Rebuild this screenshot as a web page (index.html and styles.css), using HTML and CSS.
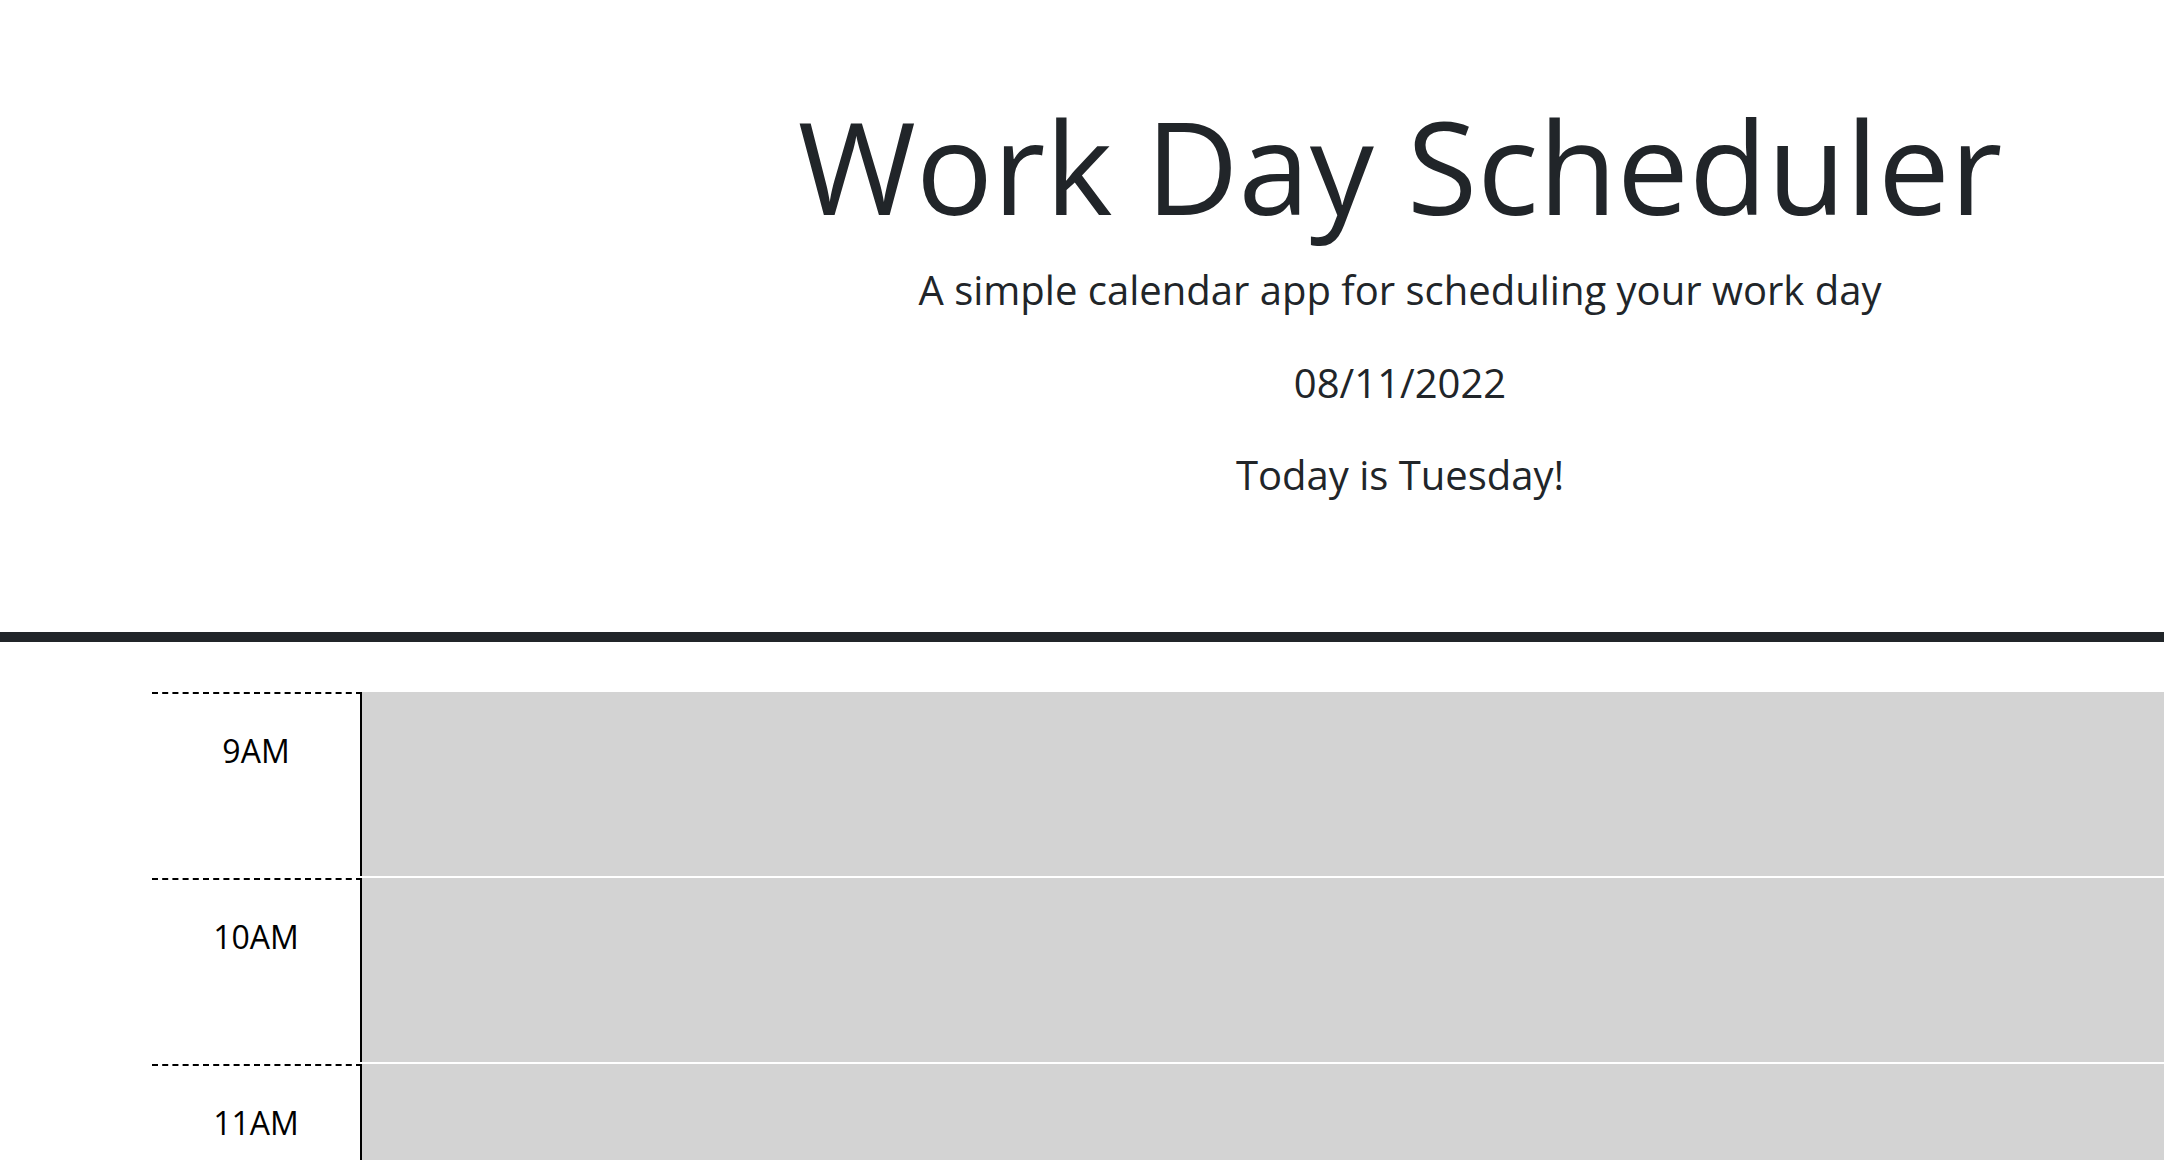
FILE: index.html
```html
<!DOCTYPE html>
<html lang="en">
<head>
<meta charset="utf-8">
<title>Work Day Scheduler</title>
<link rel="stylesheet" href="styles.css">
</head>
<body>
<header class="jumbotron">
  <h1 class="display-title">Work Day Scheduler</h1>
  <p class="lead">A simple calendar app for scheduling your work day</p>
  <p class="lead" id="currentDay">08/11/2022</p>
  <p class="lead" id="weekday">Today is Tuesday!</p>
</header>
<main class="schedule">
  <div class="time-block">
    <div class="hour">9AM</div>
    <textarea class="description"></textarea>
  </div>
  <div class="time-block">
    <div class="hour">10AM</div>
    <textarea class="description"></textarea>
  </div>
  <div class="time-block">
    <div class="hour">11AM</div>
    <textarea class="description"></textarea>
  </div>
  <div class="time-block">
    <div class="hour">12PM</div>
    <textarea class="description"></textarea>
  </div>
</main>
</body>
</html>
```
FILE: styles.css
```css
html, body {
  margin: 0;
  padding: 0;
  overflow: hidden;
}

body {
  font-family: "Open Sans", "Liberation Sans", sans-serif;
  color: #212529;
  background: #fff;
}

.jumbotron {
  box-sizing: border-box;
  height: 642px;
  padding: 89.3px 0 0 636px;
  text-align: center;
  border-bottom: 10px solid #212529;
}

.display-title {
  margin: 0 0 17px;
  font-size: 128px;
  line-height: 154px;
  font-weight: 400;
  color: #212529;
}

.lead {
  margin: 0 0 32.5px;
  font-size: 40px;
  line-height: 60px;
  font-weight: 400;
}

.schedule {
  margin-top: 50px;
  padding-left: 152px;
}

.time-block {
  display: flex;
  height: 184px;
  margin-bottom: 2px;
}

.hour {
  box-sizing: border-box;
  width: 210px;
  flex: none;
  border-top: 2px dashed #000;
  border-right: 2px solid #000;
  text-align: center;
  color: #000;
  font-size: 32px;
  line-height: 46px;
  padding-top: 33.5px;
}

.description {
  flex: 1;
  display: block;
  margin: 0;
  border: none;
  background: #d3d3d3;
  resize: none;
  font-family: inherit;
  font-size: 28px;
  padding: 10px;
}
```
